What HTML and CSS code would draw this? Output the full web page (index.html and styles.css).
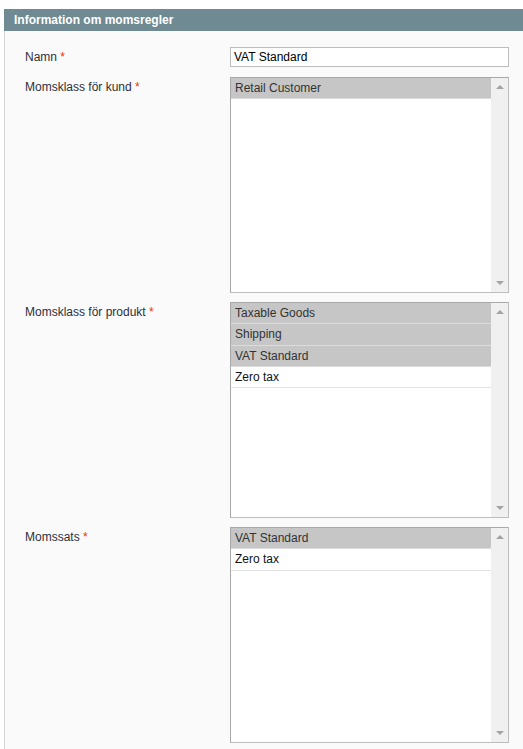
FILE: index.html
```html
<!DOCTYPE html>
<html lang="sv">
<head>
<meta charset="utf-8">
<title>Information om momsregler</title>
<link rel="stylesheet" href="styles.css">
</head>
<body>
<div class="header">Information om momsregler</div>
<div class="panel">
  <div class="row row-name">
    <div class="label">Namn <span class="req">*</span></div>
    <div class="field"><div class="input">VAT Standard</div></div>
  </div>
  <div class="row">
    <div class="label">Momsklass för kund <span class="req">*</span></div>
    <div class="field">
      <div class="list">
        <div class="opts">
          <div class="opt sel">Retail Customer</div>
        </div>
        <div class="scroll"><span class="up"></span><span class="down"></span></div>
      </div>
    </div>
  </div>
  <div class="row">
    <div class="label">Momsklass för produkt <span class="req">*</span></div>
    <div class="field">
      <div class="list">
        <div class="opts">
          <div class="opt sel">Taxable Goods</div>
          <div class="opt sel">Shipping</div>
          <div class="opt sel">VAT Standard</div>
          <div class="opt">Zero tax</div>
        </div>
        <div class="scroll"><span class="up"></span><span class="down"></span></div>
      </div>
    </div>
  </div>
  <div class="row">
    <div class="label">Momssats <span class="req">*</span></div>
    <div class="field">
      <div class="list">
        <div class="opts">
          <div class="opt sel">VAT Standard</div>
          <div class="opt">Zero tax</div>
        </div>
        <div class="scroll"><span class="up"></span><span class="down"></span></div>
      </div>
    </div>
  </div>
</div>
</body>
</html>
```
FILE: styles.css
```css
html, body {
  margin: 0;
  padding: 0;
  background: #ffffff;
  overflow: hidden;
  height: 749px;
}
body {
  font-family: "Liberation Sans", Arial, sans-serif;
  font-size: 12px;
  padding-top: 9px;
  box-sizing: border-box;
}
.header {
  margin-left: 4px;
  height: 22px;
  line-height: 22px;
  background: #6f8a93;
  color: #ffffff;
  font-weight: bold;
  padding-left: 10px;
}
.panel {
  box-sizing: border-box;
  margin-left: 4px;
  border-left: 1px solid #d6d6d6;
  background: #fafafa;
  height: 718px;
  padding: 16px 0 0 20px;
  display: flex;
  flex-direction: column;
  gap: 9px;
}
.row {
  display: flex;
}
.row-name {
  margin-bottom: 1px;
}
.label {
  width: 205px;
  line-height: 20px;
  color: #2f2f3a;
}
.req {
  color: #eb340a;
}
.field {
  width: 279px;
}
.input {
  box-sizing: border-box;
  height: 20px;
  border: 1px solid #bdbdbd;
  background: #ffffff;
  color: #000000;
  line-height: 18px;
  padding-left: 3px;
}
.list {
  box-sizing: border-box;
  height: 216px;
  border: 1px solid #bdbdbd;
  border-top-color: #a9a9a9;
  border-left-color: #a9a9a9;
  background: #ffffff;
  display: flex;
}
.opts {
  flex: 1;
  display: flex;
  flex-direction: column;
}
.opt {
  flex: none;
  height: 20.25px;
  line-height: 20.25px;
  padding-left: 4px;
  border-bottom: 1px solid #e2e2e2;
  color: #111111;
}
.opt.sel {
  background: #c6c6c6;
  color: #333333;
  border-bottom-color: #dcdcdc;
}
.scroll {
  width: 17px;
  background: #f0f0f0;
  position: relative;
}
.up, .down {
  position: absolute;
  left: 5px;
  width: 0;
  height: 0;
  border-left: 4px solid transparent;
  border-right: 4px solid transparent;
}
.up {
  top: 7px;
  border-bottom: 4px solid #a3a3a3;
}
.down {
  bottom: 7px;
  border-top: 4px solid #a3a3a3;
}
```
